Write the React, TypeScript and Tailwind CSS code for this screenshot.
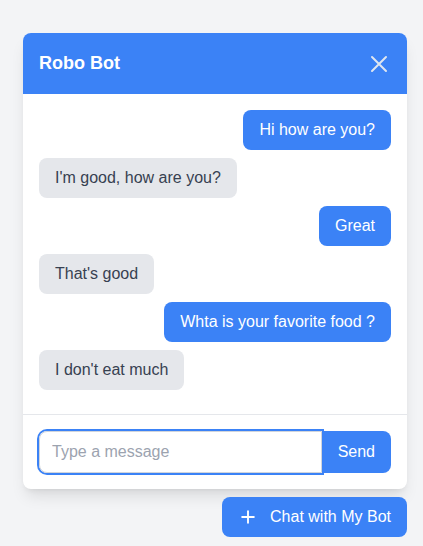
import React from 'react';
import { Plus } from 'lucide-react';

type Message = { from: 'user' | 'bot'; text: string };

const messages: Message[] = [
  { from: 'user', text: 'Hi how are you?' },
  { from: 'bot', text: "I'm good, how are you?" },
  { from: 'user', text: 'Great' },
  { from: 'bot', text: "That's good" },
  { from: 'user', text: 'Whta is your favorite food ?' },
  { from: 'bot', text: "I don't eat much" },
];

const App: React.FC = () => {
  return (
    <div className="min-h-screen bg-[#f3f4f6] flex flex-col items-end pt-[33px] pr-4 font-['Liberation_Sans',Arial,sans-serif]">
      {/* chat window */}
      <div className="w-96 bg-white rounded-lg shadow-lg flex flex-col mb-2">
        <div className="bg-[#3b82f6] text-white rounded-t-lg px-4 py-4 flex items-center justify-between">
          <h2 className="text-lg leading-[29px] font-bold">Robo Bot</h2>
          <button className="text-[#dfe6f0]">
            <svg width="24" height="24" viewBox="0 0 24 24" fill="none" stroke="currentColor" strokeWidth="2" strokeLinecap="round">
              <path d="M5 5 L19 19 M19 5 L5 19" />
            </svg>
          </button>
        </div>

        <div className="h-80 overflow-y-auto p-4 flex flex-col gap-2">
          {messages.map((m, i) => (
            <div key={i} className={m.from === 'user' ? 'flex justify-end' : 'flex justify-start'}>
              <div
                className={
                  m.from === 'user'
                    ? 'bg-[#3b82f6] text-white rounded-lg px-4 py-2 text-base leading-6'
                    : 'bg-[#e5e7eb] text-[#374151] rounded-lg px-4 py-2 text-base leading-6'
                }
              >
                {m.text}
              </div>
            </div>
          ))}
        </div>

        <div className="border-t border-[#e5e7eb] p-4 flex">
          <input
            type="text"
            placeholder="Type a message"
            className="flex-1 min-w-0 border border-[#d1d5db] rounded-l-lg px-3 py-2 text-base leading-6 outline-none ring-2 ring-[#3b82f6] placeholder-[#9ca3af]"
          />
          <button className="bg-[#3b82f6] text-white px-4 py-2 rounded-r-lg text-base leading-6">Send</button>
        </div>
      </div>

      <button className="bg-[#3b82f6] text-white rounded-lg px-4 py-2 flex items-center gap-3 text-base leading-6">
        <Plus size={20} strokeWidth={2.25} />
        <span>Chat with My Bot</span>
      </button>
    </div>
  );
};

export default App;
